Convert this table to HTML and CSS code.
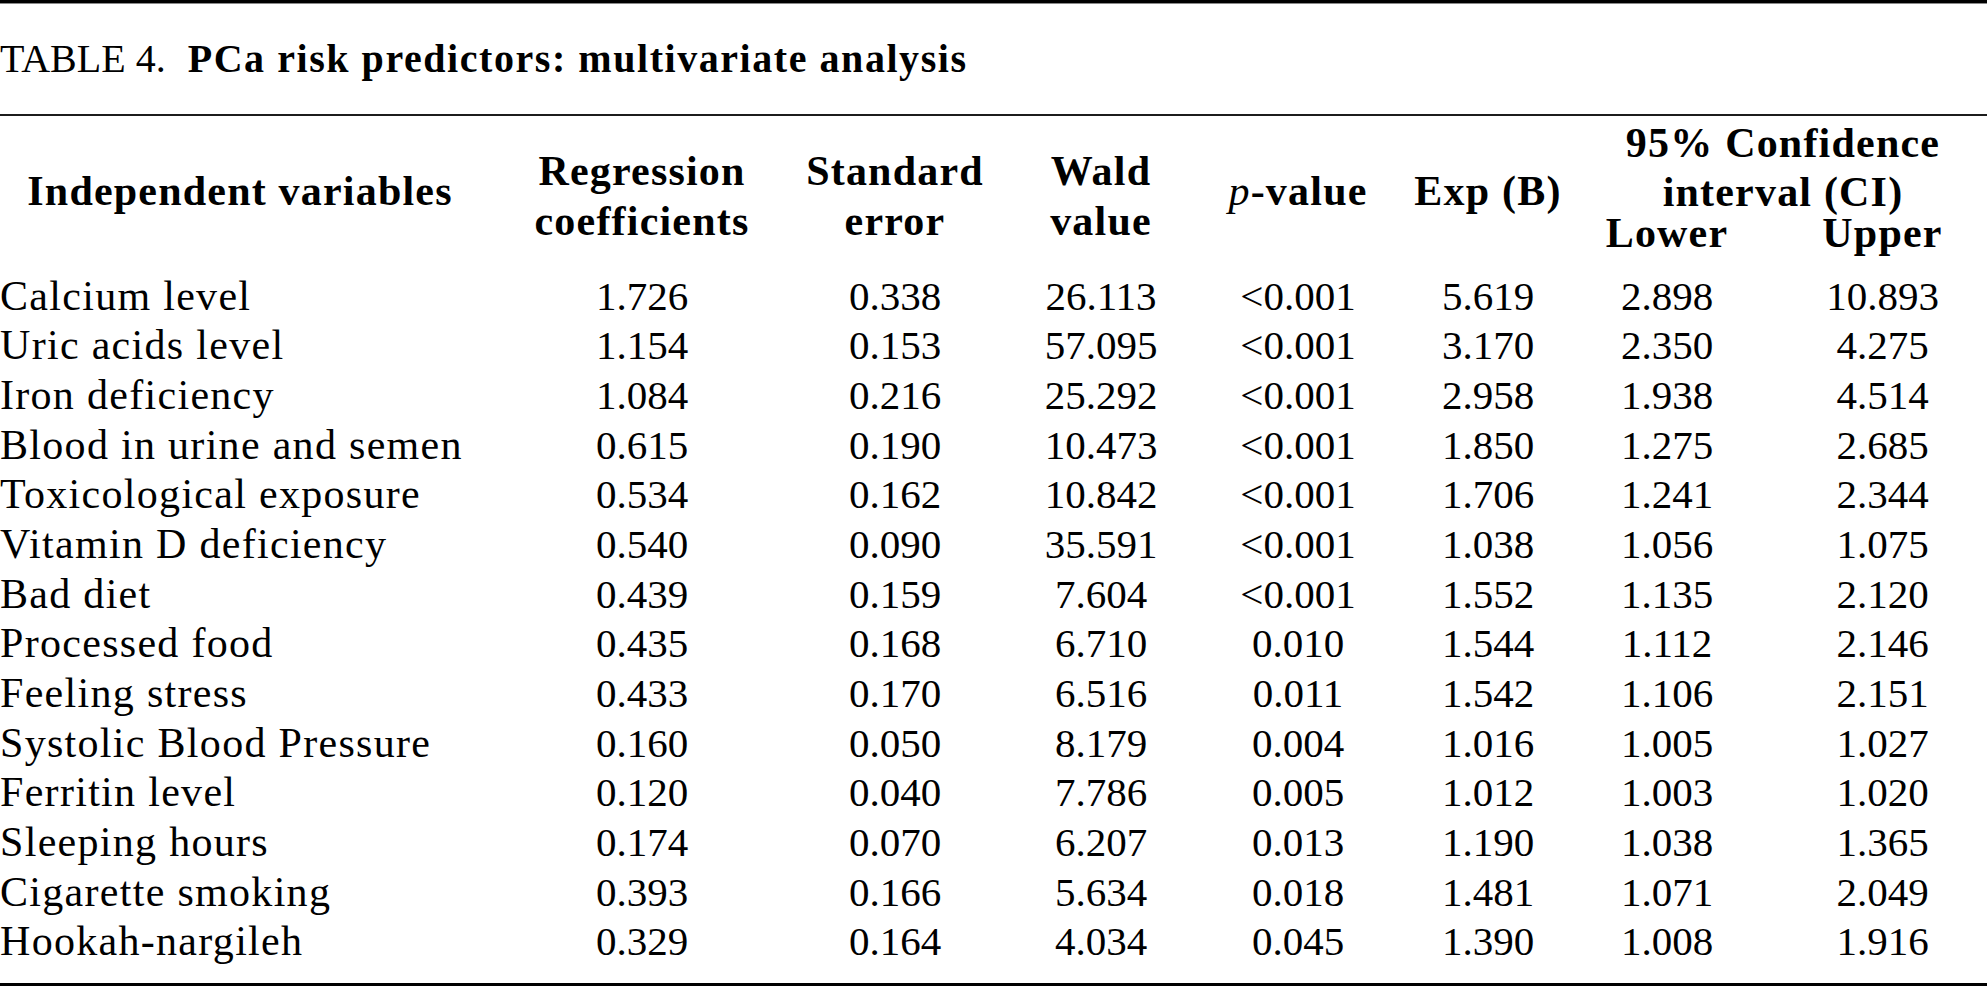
FILE: index.html
```html
<!DOCTYPE html>
<html lang="en">
<head>
<meta charset="utf-8">
<title>TABLE 4. PCa risk predictors: multivariate analysis</title>
<link rel="stylesheet" href="styles.css">
</head>
<body>
<div class="table">
  <div class="caption"><span class="label">TABLE 4.</span><span class="title">PCa risk predictors: multivariate analysis</span></div>
  <div class="head">
    <div class="h one c1">Independent variables</div>
    <div class="h two">Regression<br>coefficients</div>
    <div class="h two">Standard<br>error</div>
    <div class="h two">Wald<br>value</div>
    <div class="h one"><i class="pv">p</i>-value</div>
    <div class="h one">Exp (B)</div>
    <div class="h ci">95% Confidence<br>interval (CI)</div>
    <div class="h sub">Lower</div>
    <div class="h sub last">Upper</div>
  </div>
  <div class="rows">
    <div class="name">Calcium level</div><div>1.726</div><div>0.338</div><div>26.113</div><div>&lt;0.001</div><div>5.619</div><div>2.898</div><div class="last">10.893</div>
    <div class="name">Uric acids level</div><div>1.154</div><div>0.153</div><div>57.095</div><div>&lt;0.001</div><div>3.170</div><div>2.350</div><div class="last">4.275</div>
    <div class="name">Iron deficiency</div><div>1.084</div><div>0.216</div><div>25.292</div><div>&lt;0.001</div><div>2.958</div><div>1.938</div><div class="last">4.514</div>
    <div class="name">Blood in urine and semen</div><div>0.615</div><div>0.190</div><div>10.473</div><div>&lt;0.001</div><div>1.850</div><div>1.275</div><div class="last">2.685</div>
    <div class="name">Toxicological exposure</div><div>0.534</div><div>0.162</div><div>10.842</div><div>&lt;0.001</div><div>1.706</div><div>1.241</div><div class="last">2.344</div>
    <div class="name">Vitamin D deficiency</div><div>0.540</div><div>0.090</div><div>35.591</div><div>&lt;0.001</div><div>1.038</div><div>1.056</div><div class="last">1.075</div>
    <div class="name">Bad diet</div><div>0.439</div><div>0.159</div><div>7.604</div><div>&lt;0.001</div><div>1.552</div><div>1.135</div><div class="last">2.120</div>
    <div class="name">Processed food</div><div>0.435</div><div>0.168</div><div>6.710</div><div>0.010</div><div>1.544</div><div>1.112</div><div class="last">2.146</div>
    <div class="name">Feeling stress</div><div>0.433</div><div>0.170</div><div>6.516</div><div>0.011</div><div>1.542</div><div>1.106</div><div class="last">2.151</div>
    <div class="name">Systolic Blood Pressure</div><div>0.160</div><div>0.050</div><div>8.179</div><div>0.004</div><div>1.016</div><div>1.005</div><div class="last">1.027</div>
    <div class="name">Ferritin level</div><div>0.120</div><div>0.040</div><div>7.786</div><div>0.005</div><div>1.012</div><div>1.003</div><div class="last">1.020</div>
    <div class="name">Sleeping hours</div><div>0.174</div><div>0.070</div><div>6.207</div><div>0.013</div><div>1.190</div><div>1.038</div><div class="last">1.365</div>
    <div class="name">Cigarette smoking</div><div>0.393</div><div>0.166</div><div>5.634</div><div>0.018</div><div>1.481</div><div>1.071</div><div class="last">2.049</div>
    <div class="name">Hookah-nargileh</div><div>0.329</div><div>0.164</div><div>4.034</div><div>0.045</div><div>1.390</div><div>1.008</div><div class="last">1.916</div>
  </div>
</div>
</body>
</html>
```

FILE: styles.css
```css
html, body {
  margin: 0;
  padding: 0;
  background: #ffffff;
}

body {
  font-family: "Liberation Serif", "Times New Roman", serif;
  font-size: 40px;
  color: #000000;
  overflow: hidden;
}

.table {
  width: 1987px;
  border-top: 3px solid #000000;
}

.caption {
  border-top: 1px solid #8a8a8a;
  padding: 29.5px 0 30.5px 0;
  line-height: 50px;
  border-bottom: 2px solid #1c1c1c;
  white-space: nowrap;
}

.caption .label {
  margin-right: 22px;
}

.caption .title {
  font-weight: bold;
  letter-spacing: 1.55px;
}

.head,
.rows {
  display: grid;
  grid-template-columns: 480px 324px 182px 230px 164px 216px 142px 249px;
}

.head {
  grid-template-rows: 98px 32px;
  padding: 3px 0 22.5px 0;
  font-size: 42px;
  font-weight: bold;
  letter-spacing: 1.2px;
}

.h {
  text-align: center;
  white-space: nowrap;
}

.h.one {
  grid-row: 1 / 3;
  padding-top: 46.5px;
  line-height: 50px;
}

.h.two {
  grid-row: 1 / 3;
  padding-top: 26.5px;
  line-height: 50px;
}

.pv {
  font-weight: normal;
  font-style: italic;
}

.h.ci {
  grid-column: 7 / 9;
  grid-row: 1;
  line-height: 49px;
  padding-right: 17px;
}

.h.sub {
  grid-row: 2;
  line-height: 32px;
}

.last {
  padding-left: 40px;
}

.rows {
  grid-auto-rows: 49.7px;
  line-height: 49.7px;
  font-size: 41px;
  padding-bottom: 15.5px;
  border-bottom: 3px solid #000000;
  box-shadow: 0 1px 0 #8a8a8a;
}

.rows > div {
  text-align: center;
  white-space: nowrap;
}

.rows > .name {
  text-align: left;
  font-size: 42px;
  letter-spacing: 1.3px;
}
```
